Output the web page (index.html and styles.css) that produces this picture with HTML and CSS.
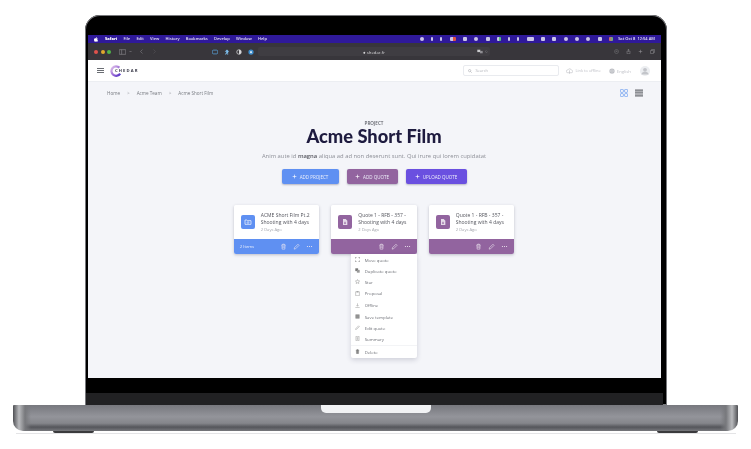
FILE: index.html
```html
<!DOCTYPE html>
<html lang="en">
<head>
  <meta charset="UTF-8">
  <meta name="viewport" content="width=device-width, initial-scale=1.0">
  <title>Shedar - Acme Short Film</title>
  <link rel="stylesheet" href="styles.css">
</head>
<body>
  <svg class="sprites" width="0" height="0">
    <symbol id="i-trash" viewBox="0 0 12 12"><path d="M2.5 3.500h7M4.500 3.500V2h3v1.500M3.300 3.500l.4 7h4.600l.4-7M5 5.500v3M7 5.500v3" fill="none" stroke="currentColor"/></symbol>
    <symbol id="i-pen" viewBox="0 0 12 12"><path d="M2 10.500l.6-2.500 5.900-5.900 1.900 1.900-5.900 5.900z" fill="none" stroke="currentColor"/></symbol>
    <symbol id="i-dots" viewBox="0 0 12 12"><circle cx="2.500" cy="6" r="1" fill="currentColor"/><circle cx="6" cy="6" r="1" fill="currentColor"/><circle cx="9.500" cy="6" r="1" fill="currentColor"/></symbol>
    <symbol id="i-doc" viewBox="0 0 12 12"><path d="M3 1.500h4l2.500 2.500v6.500H3z" fill="#e6dbe9"/><path d="M4.500 6.500h3M4.500 8.300h3" stroke="currentColor"/></symbol>
    <symbol id="i-folder" viewBox="0 0 12 12"><path d="M1.500 3h3l1 1h5v5.500h-9z" fill="none" stroke="#fff"/><circle cx="6" cy="6.800" r="1.300" fill="none" stroke="#fff" stroke-width=".8"/></symbol>
    <symbol id="i-plus" viewBox="0 0 8 8"><path d="M4 1v6M1 4h6" stroke="#fff" stroke-width="1"/></symbol>
  </svg>

  <div class="stage">
    <div class="lid">
      <div class="screen">
        <!-- mac menu bar -->
        <div class="menubar">
          <svg class="apple" viewBox="0 0 10 12"><path d="M7 0c0 1.300-1 2.400-2.200 2.400C4.700 1.200 5.800.1 7 0zM5 3.100c.6 0 1.300-.5 2.300-.5.900 0 1.800.5 2.300 1.300-2 1.200-1.600 3.900.4 4.700-.5 1.300-1.500 3.200-2.700 3.200-.8 0-1-.5-2-.5s-1.300.5-2 .5C1.800 11.800 0 9 0 6.500 0 4 1.500 2.700 3 2.700c.8 0 1.500.4 2 .4z" fill="#fff"/></svg>
          <b>Safari</b><span>File</span><span>Edit</span><span>View</span><span>History</span><span>Bookmarks</span><span>Develop</span><span>Window</span><span>Help</span>
          <div class="tray">
            <i class="round"></i><i class="thin"></i><i class="thin"></i><i class="red"></i><i></i><i class="round"></i><i></i><i class="green"></i><i class="thin"></i><i class="thin"></i><i class="wide"></i><i></i><i></i><i class="round"></i><i class="round"></i><i class="round"></i><i></i><i class="multi"></i>
            <em>Sat Oct 8&nbsp; 12:54 AM</em>
          </div>
        </div>

        <!-- safari toolbar -->
        <div class="toolbar">
          <div class="lights"><i class="l-red"></i><i class="l-yellow"></i><i class="l-green"></i></div>
          <svg class="sidebar-ico" viewBox="0 0 12 10"><path d="M.5 1h11v8H.5zM4.500 1v8" fill="none" stroke="#8f8e93"/></svg>
          <svg class="chev" viewBox="0 0 6 6"><path d="M1 2l2 2 2-2" fill="none" stroke="#9a999e"/></svg>
          <svg class="nav-ico back" viewBox="0 0 6 10"><path d="M5 1L1 5l4 4" fill="none" stroke="#8f8e93"/></svg>
          <svg class="nav-ico fwd" viewBox="0 0 6 10"><path d="M1 1l4 4-4 4" fill="none" stroke="#5a595e"/></svg>
          <div class="ext">
            <svg viewBox="0 0 8 8"><rect x=".5" y="1.500" width="7" height="5" rx="1.500" fill="none" stroke="#5aa4dc"/></svg>
            <svg viewBox="0 0 8 8"><path d="M4 .5l3 3H5.500v4h-1V5L2.500 7.500 1.500 7 3.500 3.500H1z" fill="#7fc0ee"/></svg>
            <svg viewBox="0 0 8 8"><circle cx="4" cy="4" r="3" fill="none" stroke="#d5d5d8"/><path d="M4 1a3 3 0 0 1 0 6z" fill="#d5d5d8"/></svg>
            <svg viewBox="0 0 8 8"><circle cx="4" cy="4" r="3.500" fill="#3c8ccb"/><rect x="3" y="3" width="2" height="2.500" fill="#fff"/></svg>
          </div>
          <div class="address">
            <span class="url">&#9679; shedar.fr</span>
            <svg class="translate" viewBox="0 0 10 8"><path d="M.5 1h5v4h-5z" fill="#c9c9cc"/><path d="M5 3h4.500v4H5z" fill="#8f8e93"/></svg>
            <svg class="reload" viewBox="0 0 8 8"><path d="M6.500 4A2.500 2.500 0 1 1 4 1.500" fill="none" stroke="#8f8e93"/></svg>
          </div>
          <div class="tool-right">
            <svg viewBox="0 0 10 10"><circle cx="5" cy="5" r="4" fill="none" stroke="#77767b"/><path d="M3 5h4M5 3v2" stroke="#77767b"/></svg>
            <svg viewBox="0 0 10 10"><path d="M2 4h6v5.500H2zM5 .5v5M3.500 2L5 .5 6.500 2" fill="none" stroke="#8f8e93"/></svg>
            <svg viewBox="0 0 10 10"><path d="M5 1.500v7M1.500 5h7" stroke="#9a999e"/></svg>
            <svg viewBox="0 0 10 10"><path d="M1 3h6v6H1zM3 3V1h6v6H7" fill="none" stroke="#8f8e93"/></svg>
          </div>
        </div>

        <!-- app header -->
        <header class="topnav">
          <div class="burger"><i></i><i></i><i></i></div>
          <div class="logo">
            <svg viewBox="0 0 16 16"><defs><linearGradient id="logoGrad" x1="0" y1="0" x2="1" y2="1"><stop offset="0" stop-color="#e2c6ec"/><stop offset=".55" stop-color="#9a6bd6"/><stop offset="1" stop-color="#4f2fc4"/></linearGradient></defs><path d="M12.500 3.500A6.300 6.300 0 1 0 13.500 11.500" fill="none" stroke="url(#logoGrad)" stroke-width="3"/></svg>
            <span>CHEDAR</span>
          </div>
          <div class="search">
            <svg viewBox="0 0 8 8"><circle cx="3.300" cy="3.300" r="2.300" fill="none" stroke="#9a9ca3"/><path d="M5 5l2.500 2.500" stroke="#9a9ca3"/></svg>
            <span>Search</span>
          </div>
          <div class="nav-link offline">
            <svg viewBox="0 0 10 8"><path d="M2.500 6.500a2 2 0 0 1 0-4 3 3 0 0 1 5.500.4 1.800 1.800 0 0 1-.5 3.600z" fill="none" stroke="#b7b9bf" stroke-width=".8"/><path d="M5 3v5" stroke="#b7b9bf" stroke-width=".8"/></svg>
            <span>Link to offline</span>
          </div>
          <div class="nav-link lang">
            <svg viewBox="0 0 8 8"><circle cx="4" cy="4" r="3.500" fill="#b7b9bf"/><path d="M.5 4h7M4 .5c-2 2-2 5 0 7 2-2 2-5 0-7" fill="none" stroke="#fff" stroke-width=".4"/></svg>
            <span>English</span>
          </div>
          <svg class="avatar" viewBox="0 0 10 10"><circle cx="5" cy="5" r="5" fill="#eceef1"/><circle cx="5" cy="3.800" r="1.900" fill="#c3c5ca"/><path d="M1.500 8.500a3.500 2.800 0 0 1 7 0z" fill="#c3c5ca"/></svg>
        </header>

        <main class="content">
          <div class="crumbs">
            <span>Home</span><span class="sep">&gt;</span><span>Acme Team</span><span class="sep">&gt;</span><span>Acme Short Film</span>
            <div class="views">
              <svg viewBox="0 0 8 8"><rect x=".4" y=".4" width="3" height="3" rx=".8" fill="none" stroke="#6f9ff0" stroke-width=".8"/><rect x="4.600" y=".4" width="3" height="3" rx=".8" fill="none" stroke="#6f9ff0" stroke-width=".8"/><rect x=".4" y="4.600" width="3" height="3" rx=".8" fill="none" stroke="#6f9ff0" stroke-width=".8"/><rect x="4.600" y="4.600" width="3" height="3" rx=".8" fill="none" stroke="#6f9ff0" stroke-width=".8"/></svg>
              <svg viewBox="0 0 8 8"><path d="M0 1.200h8M0 3.100h8M0 5h8M0 6.900h8" stroke="#6a6d73" stroke-width="1.200"/></svg>
            </div>
          </div>

          <div class="hero">
            <div class="eyebrow">PROJECT</div>
            <h1>Acme Short Film</h1>
            <p>Anim aute id <strong>magna</strong> aliqua ad ad non deserunt sunt. Qui irure qui lorem cupidatat</p>
            <div class="actions">
              <button class="btn btn-blue"><svg><use href="#i-plus"/></svg>ADD PROJECT</button>
              <button class="btn btn-purple"><svg><use href="#i-plus"/></svg>ADD QUOTE</button>
              <button class="btn btn-violet"><svg><use href="#i-plus"/></svg>UPLOAD QUOTE</button>
            </div>
          </div>

          <div class="cards">
            <div class="card">
              <div class="card-body">
                <div class="thumb thumb-blue"><svg><use href="#i-folder"/></svg></div>
                <div class="card-text"><h2>ACME Short Film Pt.2 Shooting with 4 days</h2><small>2 Days Ago</small></div>
              </div>
              <div class="card-foot foot-blue">
                <span class="count">2 Items</span>
                <svg><use href="#i-trash"/></svg><svg><use href="#i-pen"/></svg><svg><use href="#i-dots"/></svg>
              </div>
            </div>

            <div class="card">
              <div class="card-body">
                <div class="thumb thumb-purple"><svg><use href="#i-doc"/></svg></div>
                <div class="card-text"><h2>Quote 1 - RFB - 357 - Shooting with 4 days</h2><small>2 Days Ago</small></div>
              </div>
              <div class="card-foot foot-purple">
                <svg><use href="#i-trash"/></svg><svg><use href="#i-pen"/></svg><svg><use href="#i-dots"/></svg>
              </div>
              <!-- dropdown from the dots button -->
              <ul class="menu">
                <li><svg viewBox="0 0 8 8"><path d="M.5 2.500v-2h2M5.500.5h2v2M.5 5.500v2h2M5.500 7.500h2v-2" fill="none" stroke="#777"/></svg>Move quote</li>
                <li><svg viewBox="0 0 8 8"><path d="M.5.5h4.500v4.500H.5z" fill="#777"/><path d="M3 3h4.500v4.500H3z" fill="#999"/></svg>Duplicate quote</li>
                <li><svg viewBox="0 0 8 8"><path d="M4 .8l1 2.200 2.400.3-1.800 1.600.5 2.400L4 6.100 1.900 7.300l.5-2.400L.6 3.300 3 3z" fill="none" stroke="#888" stroke-width=".7"/></svg>Star</li>
                <li class="gap"><svg viewBox="0 0 8 8"><path d="M1 1.200h6v6.300H1zM3 .5h2v1.300H3z" fill="none" stroke="#888" stroke-width=".7"/></svg>Proposal</li>
                <li class="gap"><svg viewBox="0 0 8 8"><path d="M4 .5v4.500M2.300 3.500L4 5.200l1.700-1.700M.5 7.300h7" fill="none" stroke="#888" stroke-width=".7"/></svg>Offline</li>
                <li><svg viewBox="0 0 8 8"><path d="M.8.8h6.400v6.400H.8z" fill="#777"/><path d="M1 3h6M1 5h6" stroke="#fff" stroke-width=".5"/></svg>Save template</li>
                <li><svg viewBox="0 0 8 8"><path d="M1 7.200l.4-1.600 4.300-4.300 1.200 1.200-4.300 4.300z" fill="none" stroke="#888" stroke-width=".7"/></svg>Edit quote</li>
                <li><svg viewBox="0 0 8 8"><path d="M1.500.5h5v7h-5zM2.800 2.500h2.400M2.800 4h2.400M2.800 5.500h2.400" fill="none" stroke="#888" stroke-width=".7"/></svg>Summary</li>
                <li class="danger"><svg viewBox="0 0 8 8"><path d="M1.200 2h5.600M3 2V.9h2V2M2 2l.3 5.400h3.400L6 2z" fill="#888" stroke="#777" stroke-width=".5"/></svg>Delete</li>
              </ul>
            </div>

            <div class="card">
              <div class="card-body">
                <div class="thumb thumb-purple"><svg><use href="#i-doc"/></svg></div>
                <div class="card-text"><h2>Quote 1 - RFB - 357 - Shooting with 4 days</h2><small>2 Days Ago</small></div>
              </div>
              <div class="card-foot foot-purple">
                <svg><use href="#i-trash"/></svg><svg><use href="#i-pen"/></svg><svg><use href="#i-dots"/></svg>
              </div>
            </div>
          </div>
        </main>
      </div>
      <div class="chin"></div>
    </div>

    <div class="base"><div class="notch"></div></div>
    <div class="feet"><i></i><i></i></div>
    <div class="floor"></div>
  </div>
</body>
</html>
```

FILE: styles.css
```css
* {
  box-sizing: border-box;
}

html, body {
  margin: 0;
  height: 100%;
  background: #fff;
  overflow: hidden;
}

body {
  font-family: "Open Sans", "Liberation Sans", sans-serif;
}

.sprites {
  display: block;
  height: 0;
}

.stage {
  width: 751px;
  height: 449px;
  padding-top: 15px;
  display: flex;
  flex-direction: column;
  align-items: center;
}

/* laptop lid */
.lid {
  width: 582px;
  height: 390px;
  margin-left: 1px;
  padding: 20px 6px 0 3px;
  background: #000;
  border-radius: 15px 15px 0 0;
  box-shadow: inset 0 0 0 1px #77787c;
  display: flex;
  flex-direction: column;
}

.screen {
  height: 343px;
  display: flex;
  flex-direction: column;
  filter: blur(0.45px);
}

.chin {
  height: 12px;
  margin: 15px -2px 0;
  background: #212123;
}

/* menu bar */
.menubar {
  height: 8px;
  flex: none;
  background: #2f199a;
  color: #e6e3f5;
  font-size: 4px;
  line-height: 8px;
  display: flex;
  align-items: center;
  padding-left: 6px;
  gap: 6.3px;
  font-weight: 600;
}

.apple {
  width: 4px;
  height: 5px;
  margin-right: 0.7px;
}

.menubar b {
  color: #fff;
}

.tray {
  margin-left: auto;
  padding-right: 6px;
  display: flex;
  align-items: center;
  gap: 7.3px;
}

.tray i {
  width: 4px;
  height: 4px;
  background: #c9c5e6;
  border-radius: 1px;
}

.tray .round {
  border-radius: 50%;
}

.tray .thin {
  width: 2px;
}

.tray .wide {
  width: 7px;
}

.tray .red {
  background: linear-gradient(90deg, #c9c5e6 50%, #e0533f 50%);
  width: 6px;
}

.tray .green {
  background: linear-gradient(90deg, #c9c5e6 50%, #58c07a 50%);
}

.tray .multi {
  background: linear-gradient(90deg, #e05a6a, #58c07a);
}

.tray em {
  font-style: normal;
  margin-left: -2px;
  white-space: nowrap;
}

/* safari toolbar */
.toolbar {
  height: 17px;
  flex: none;
  background: #38363b;
  display: flex;
  align-items: center;
  padding-left: 6px;
}

.lights {
  display: flex;
  gap: 2.5px;
}

.lights i {
  width: 4px;
  height: 4px;
  border-radius: 50%;
}

.l-red { background: #e0524c; }
.l-yellow { background: #e0a82c; }
.l-green { background: #50b548; }

.sidebar-ico {
  width: 7px;
  height: 6px;
  margin-left: 8px;
}

.chev {
  width: 3px;
  height: 3px;
  margin-left: 3px;
}

.nav-ico {
  width: 3px;
  height: 5px;
}

.back {
  margin-left: 8px;
}

.fwd {
  margin-left: 10px;
}

.ext {
  display: flex;
  gap: 6px;
  margin-left: 56px;
}

.ext svg {
  width: 6px;
  height: 6px;
}

.address {
  width: 232px;
  height: 9px;
  margin-left: 4px;
  background: #3f3d42;
  border-radius: 2px;
  display: flex;
  align-items: center;
  color: #d8d8da;
  font-size: 4.3px;
  padding: 0 2px 0 105px;
}

.translate {
  width: 6px;
  height: 5px;
  margin-left: auto;
}

.reload {
  width: 3px;
  height: 3px;
  margin-left: 2px;
}

.tool-right {
  margin-left: auto;
  padding-right: 6px;
  display: flex;
  gap: 7px;
}

.tool-right svg {
  width: 5px;
  height: 5px;
}

/* app header */
.topnav {
  height: 22px;
  flex: none;
  background: #fff;
  border-bottom: 1px solid #eceef2;
  display: flex;
  align-items: center;
  padding: 0 11px 0 9px;
}

.burger {
  width: 7px;
  display: flex;
  flex-direction: column;
  gap: 1px;
}

.burger i {
  height: 1px;
  background: #6a6d73;
}

.logo {
  display: flex;
  align-items: center;
  margin-left: 6px;
}

.logo svg {
  width: 12px;
  height: 12px;
}

.logo span {
  margin-left: -7px;
  font-size: 4.2px;
  font-weight: 700;
  letter-spacing: 1.1px;
  color: #3a3a4a;
}

.search {
  width: 96px;
  height: 11px;
  margin-left: auto;
  margin-right: 7px;
  border: 1px solid #e9ebef;
  border-radius: 2px;
  display: flex;
  align-items: center;
  padding-left: 4px;
  font-size: 4px;
  color: #b4b6bc;
  gap: 3px;
}

.search svg {
  width: 4px;
  height: 4px;
}

.nav-link {
  display: flex;
  align-items: center;
  gap: 2px;
  font-size: 4px;
  color: #c0c2c8;
}

.offline svg {
  width: 7px;
  height: 6px;
}

.lang {
  margin-left: 8px;
  font-size: 4.3px;
}

.lang svg {
  width: 6px;
  height: 6px;
}

.avatar {
  width: 10px;
  height: 10px;
  margin-left: 9px;
}

/* page */
.content {
  flex: 1;
  background: #f4f5f9;
  padding: 7px 18px 0 19px;
  display: flex;
  flex-direction: column;
}

.crumbs {
  height: 8px;
  display: flex;
  align-items: center;
  font-size: 4.6px;
  color: #777a80;
}

.sep {
  margin: 0 7px;
  color: #9a9ca3;
}

.views {
  margin-left: auto;
  display: flex;
  gap: 7px;
}

.views svg {
  width: 8px;
  height: 8px;
}

.hero {
  margin: 24px 0 0 -2px;
  text-align: center;
}

.eyebrow {
  font-size: 4.6px;
  line-height: 5px;
  font-weight: 600;
  color: #5c5e66;
}

h1 {
  margin: 1px 0 0;
  font-family: Lato, sans-serif;
  font-size: 18.3px;
  line-height: 18px;
  font-weight: 900;
  color: #1e1b3f;
}

.hero p {
  margin: 7px 0 0;
  font-size: 5.85px;
  line-height: 9px;
  color: #8d8f97;
}

.hero strong {
  color: #55565e;
  font-weight: 600;
}

.actions {
  margin-top: 8px;
  display: flex;
  justify-content: center;
  gap: 8px;
}

.btn {
  height: 15px;
  border: 0;
  border-radius: 2px;
  padding: 0;
  display: flex;
  align-items: center;
  justify-content: center;
  gap: 3px;
  color: #eef0fb;
  font: 500 4.5px "Open Sans", sans-serif;
  box-shadow: 0 1px 2px rgba(60, 60, 90, 0.35);
}

.btn svg {
  width: 5px;
  height: 5px;
}

.btn-blue { width: 57px; background: #5f90f2; }
.btn-purple { width: 51px; background: #92649f; }
.btn-violet { width: 61px; background: #6a50e0; }

/* cards */
.cards {
  margin: 21px 0 0 -2px;
  display: flex;
  justify-content: center;
  gap: 12px;
}

.card {
  width: 85.5px;
  height: 49px;
  position: relative;
  display: flex;
  flex-direction: column;
  border-radius: 2px;
  box-shadow: 0 1px 3px rgba(60, 60, 90, 0.3);
}

.card-body {
  flex: 1;
  background: #fff;
  border-radius: 2px 2px 0 0;
  display: flex;
  align-items: center;
  padding: 0 6px 0 7px;
  gap: 6px;
}

.thumb {
  width: 14px;
  height: 14px;
  flex: none;
  border-radius: 2px;
  display: flex;
  align-items: center;
  justify-content: center;
}

.thumb svg {
  width: 8px;
  height: 8px;
}

.thumb-blue { background: #5f90f2; }
.thumb-purple { background: #92649f; color: #92649f; }

.card-text h2 {
  margin: 0;
  font-size: 5px;
  line-height: 7.5px;
  font-weight: 500;
  color: #55565e;
}

.card-text small {
  display: block;
  font-size: 4.1px;
  line-height: 6px;
  color: #a2a4ab;
}

.card-foot {
  height: 15px;
  flex: none;
  border-radius: 0 0 2px 2px;
  display: flex;
  align-items: center;
  justify-content: flex-end;
  gap: 6px;
  padding: 0 6px;
  color: #f0e9f2;
}

.card-foot svg {
  width: 7px;
  height: 7px;
}

.foot-blue { background: #5f90f2; }
.foot-purple { background: #92649f; }

.count {
  margin-right: auto;
  font-size: 4.2px;
  color: #e8eefc;
}

/* dropdown */
.menu {
  position: absolute;
  top: 49px;
  right: 0;
  width: 66px;
  margin: 0;
  padding: 0;
  list-style: none;
  background: #fff;
  border-radius: 0 0 2px 2px;
  box-shadow: 0 2px 5px rgba(60, 60, 90, 0.2);
  font-size: 4.3px;
  color: #6d6f76;
}

.menu li {
  height: 11px;
  padding-left: 4.5px;
  display: flex;
  align-items: center;
  gap: 4.5px;
}

.menu svg {
  width: 5px;
  height: 5px;
}

.menu .gap {
  height: 12px;
}

.menu .danger {
  height: 12.5px;
  border-top: 1px solid #f3f4f6;
  margin-top: 1px;
}

/* laptop base */
.base {
  width: 725px;
  height: 26px;
  flex: none;
  border-radius: 1px 1px 10px 10px;
  background:
    linear-gradient(90deg, #4f5054 0, #b9babd 6px, #77787c 12px, transparent 18px, transparent calc(100% - 18px), #77787c calc(100% - 12px), #b9babd calc(100% - 6px), #4f5054 100%),
    linear-gradient(180deg, #77787e 0, #93949a 45%, #85868b 70%, #55565b 85%, #77787c 100%);
}

.notch {
  width: 110px;
  height: 8px;
  margin: 0 auto;
  background: #f1f2f4;
  border-radius: 0 0 5px 5px;
}

.feet {
  width: 645px;
  height: 2px;
  flex: none;
  display: flex;
  justify-content: space-between;
}

.feet i {
  width: 41px;
  background: #3a3a3d;
  border-radius: 0 0 3px 3px;
}

.floor {
  width: 720px;
  height: 1px;
  background: #e4e4e6;
}
```
